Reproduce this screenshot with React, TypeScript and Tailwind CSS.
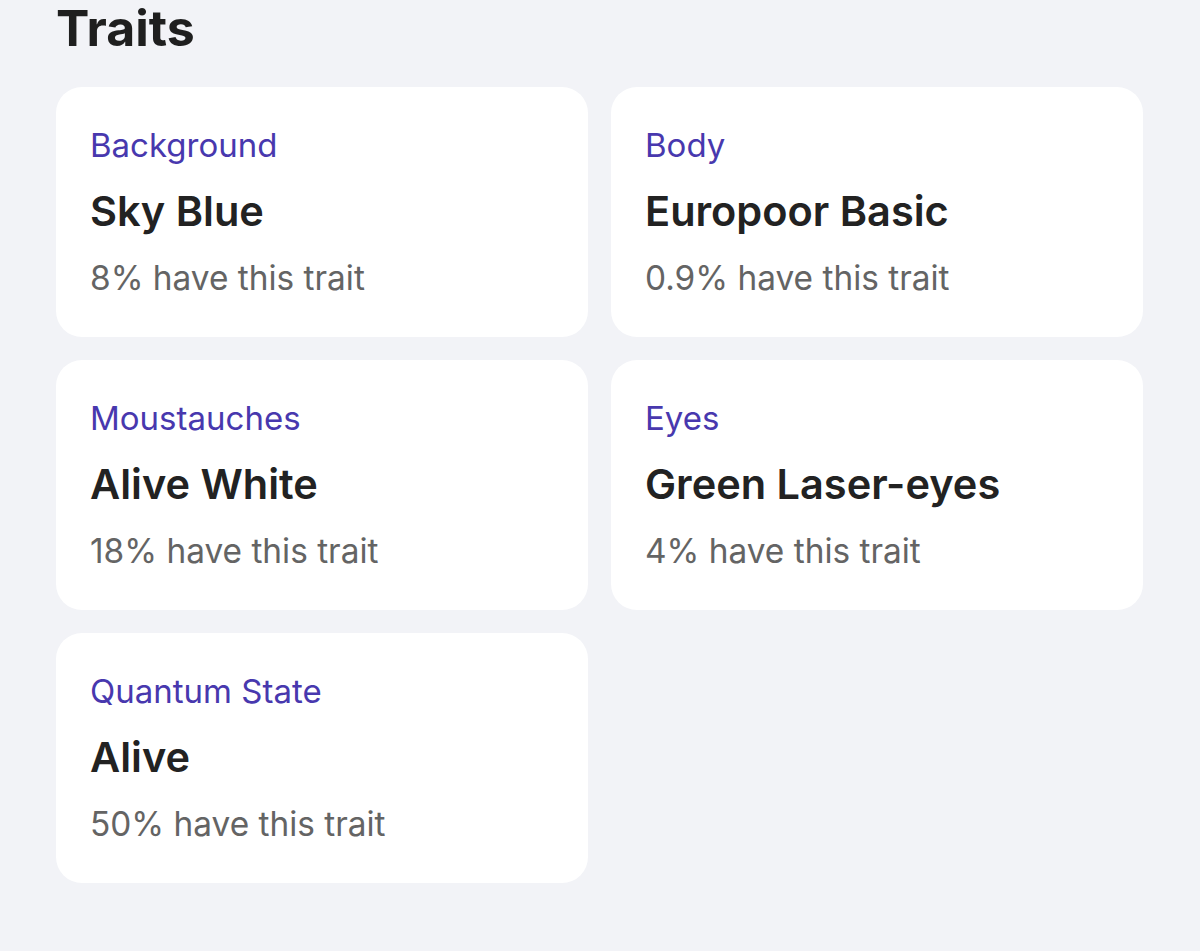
import React from "react";

type Trait = { type: string; value: string; share: string };

const traits: Trait[] = [
  { type: "Background", value: "Sky Blue", share: "8%" },
  { type: "Body", value: "Europoor Basic", share: "0.9%" },
  { type: "Moustauches", value: "Alive White", share: "18%" },
  { type: "Eyes", value: "Green Laser-eyes", share: "4%" },
  { type: "Quantum State", value: "Alive", share: "50%" },
];

function TraitCard({ t }: { t: Trait }) {
  return (
    <div className="h-[250px] rounded-[26px] bg-white pl-[34px] pt-[38px]">
      <div className="text-[33px] leading-[40px] text-[#4838ae]">{t.type}</div>
      <div className="mt-[24px] text-[41.5px] leading-[44px] font-semibold text-[#222222]">{t.value}</div>
      <div className="mt-[25px] text-[33.4px] leading-[40px] text-[#646464]">{t.share} have this trait</div>
    </div>
  );
}

export default function App() {
  return (
    <div className="min-h-[951px] w-[1200px] bg-[#f2f3f7] pl-[56px] pr-[57px] pt-[4px]" style={{ fontFamily: "Inter, 'Noto Sans', sans-serif" }}>
      <h1 className="text-[50px] leading-[48px] font-bold text-[#1f1f1f]">Traits</h1>
      <div className="mt-[35px] grid grid-cols-2 gap-x-[23px] gap-y-[23px]">
        {traits.map((t) => (
          <TraitCard key={t.type} t={t} />
        ))}
      </div>
    </div>
  );
}
